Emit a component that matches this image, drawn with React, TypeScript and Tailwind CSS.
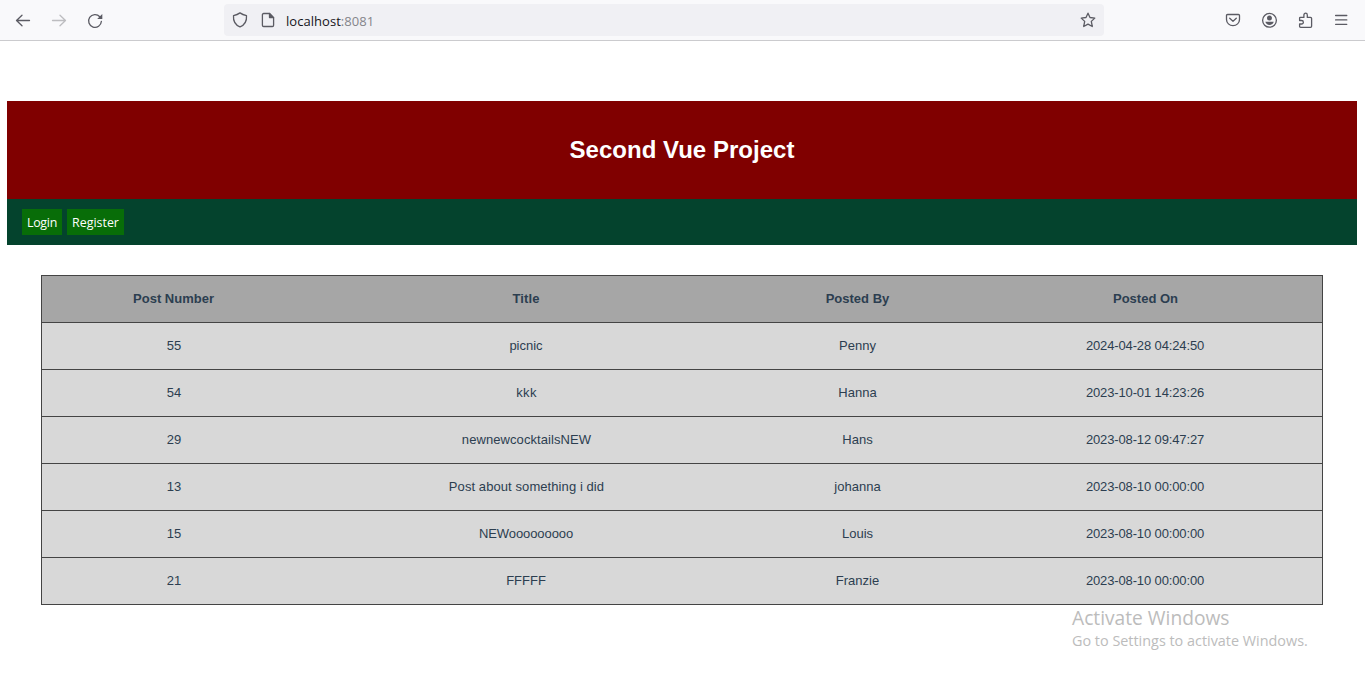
import React from "react";

type Post = { id: string; title: string; author: string; date: string; titleClass: string };

const posts: Post[] = [
  { id: "55", title: "picnic", author: "Penny", date: "2024-04-28 04:24:50", titleClass: "" },
  { id: "54", title: "kkk", author: "Hanna", date: "2023-10-01 14:23:26", titleClass: "tracking-[0.4px] pl-px" },
  { id: "29", title: "newnewcocktailsNEW", author: "Hans", date: "2023-08-12 09:47:27", titleClass: "tracking-[0.08px] pl-px" },
  { id: "13", title: "Post about something i did", author: "johanna", date: "2023-08-10 00:00:00", titleClass: "tracking-[0.08px] pl-px" },
  { id: "15", title: "NEWooooooooo", author: "Louis", date: "2023-08-10 00:00:00", titleClass: "tracking-[-0.08px]" },
  { id: "21", title: "FFFFF", author: "Franzie", date: "2023-08-10 00:00:00", titleClass: "" },
];

function Icon({ children, className = "" }: { children: React.ReactNode; className?: string }) {
  return (
    <svg
      width="16"
      height="16"
      viewBox="0 0 16 16"
      fill="none"
      stroke="currentColor"
      strokeWidth="1.3"
      strokeLinecap="round"
      strokeLinejoin="round"
      className={"shrink-0 " + className}
    >
      {children}
    </svg>
  );
}

function BrowserBar() {
  return (
    <div className="flex h-[41px] items-start border-b border-[#cbcbce] bg-[#f9f9fb] text-[#5b5b63]">
      <div className="flex w-[224px] gap-5 pt-[13px] pl-[15px]">
        <Icon>
          <path d="M14.5 7.500H1.5M7 2.200L1.5 7.500L7 12.800" />
        </Icon>
        <Icon className="text-[#bdbdc0]">
          <path d="M1.5 7.500H14.5M9 2.200L14.5 7.500L9 12.800" />
        </Icon>
        <Icon>
          <path d="M12.800 3.700A6.400 6.400 0 1 0 14.400 8.300" />
          <path d="M15.300 1V6.100H10.200Z" fill="currentColor" stroke="none" />
        </Icon>
      </div>
      <div className="mt-1 flex h-8 w-[880px] items-start rounded bg-[#f0f0f4] pr-2 pl-2">
        <Icon className="mt-2">
          <path d="M8 .9C9.800 2.200 12 3.100 14.500 3.700C14.900 8.500 12.800 12.800 8 14.900C3.200 12.800 1.100 8.500 1.500 3.700C4 3.100 6.200 2.200 8 .9Z" />
        </Icon>
        <Icon className="mt-2 ml-3">
          <path d="M9.500 1.500H3.700C2.900 1.500 2.400 2 2.400 2.800V13.200C2.400 14 2.900 14.500 3.700 14.500H12.300C13.100 14.500 13.600 14 13.600 13.200V5.600Z" />
          <path d="M9.500 1.500V5.600H13.600Z" fill="currentColor" />
        </Icon>
        <div className="ml-[10px] flex-1 pt-[7px] font-['Open_Sans',sans-serif] text-[13px] leading-5 tracking-[0.04px] text-[#15141a]">
          localhost<span className="text-[#85858b]">:8081</span>
        </div>
        <Icon className="mt-2">
          <path d="M8 1.200L10 5.500L14.800 6.100L11.300 9.400L12.300 14.500L8 12.100L3.700 14.500L4.700 9.400L1.200 6.100L6 5.500Z" />
        </Icon>
      </div>
      <div className="flex flex-1 justify-end gap-5 pt-3 pr-4">
        <Icon>
          <path d="M2.600 2.500H13.400C14.100 2.500 14.500 2.900 14.500 3.600V7.500A6.500 6.200 0 0 1 1.500 7.500V3.600C1.500 2.900 1.900 2.500 2.600 2.500Z" />
          <path d="M4.700 6.200L8 9.300L11.300 6.200" />
        </Icon>
        <Icon className="overflow-visible">
          <circle cx="8.500" cy="8.300" r="6.900" />
          <circle cx="8.500" cy="6.100" r="2.500" fill="currentColor" stroke="none" />
          <path d="M4.300 9.800H12.700C12.200 11.700 10.600 12.900 8.500 12.900S4.800 11.700 4.300 9.800Z" fill="currentColor" stroke="none" />
        </Icon>
        <Icon className="overflow-visible">
          <path d="M3.200 5.400H6.900V2.900A1.700 1.700 0 0 1 10.300 2.900V5.400H13.500C14.200 5.400 14.600 5.800 14.600 6.400V14.300C14.600 15 14.200 15.400 13.500 15.400H3.700C3 15.400 2.600 15 2.600 14.300V12H4.600A1.750 1.750 0 0 0 4.600 8.500H2.600V6C2.600 5.600 2.800 5.400 3.200 5.400Z" />
        </Icon>
        <Icon>
          <path d="M2.600 3.500H13.800M2.600 7.900H13.800M2.600 12.300H13.800" />
        </Icon>
      </div>
    </div>
  );
}

export default function App() {
  return (
    <div className="flex h-[682px] flex-col overflow-hidden bg-white font-['Liberation_Sans',Arial,sans-serif]">
      <BrowserBar />
      <header className="mt-[60px] mr-2 ml-[7px]">
        <div className="flex h-[98px] items-center justify-center bg-[#800000]">
          <h1 className="text-2xl leading-7 font-bold tracking-[0.03px] text-white">Second Vue Project</h1>
        </div>
        <nav className="flex h-[46px] items-center gap-[5px] bg-[#04432d] pl-[15px] font-['Open_Sans',sans-serif] text-[12.4px] text-white">
          <button className="h-[26px] w-10 bg-[#086d08] pt-[2px] leading-[18px] tracking-[-0.25px]">Login</button>
          <button className="h-[26px] w-[57px] bg-[#086d08] pt-[2px] leading-[18px]">Register</button>
        </nav>
      </header>
      <main className="mt-[30px] mr-[42px] ml-[41px]">
        <table className="w-full table-fixed border-separate border-spacing-0 border border-[#444] text-center text-[13px] leading-4 text-[#2c3e50]">
          <colgroup>
            <col className="w-[264px]" />
            <col className="w-[440px]" />
            <col className="w-[223px]" />
            <col className="w-[353px]" />
          </colgroup>
          <thead>
            <tr className="h-[46px] bg-[#a6a6a6]">
              <th className="pr-px">Post Number</th>
              <th className="tracking-[0.15px]">Title</th>
              <th>Posted By</th>
              <th>Posted On</th>
            </tr>
          </thead>
          <tbody>
            {posts.map((p) => (
              <tr key={p.id} className="h-[47px] bg-[#d8d8d8]">
                <td className="border-t border-[#444]">{p.id}</td>
                <td className={"border-t border-[#444] " + p.titleClass}>{p.title}</td>
                <td className="border-t border-[#444]">{p.author}</td>
                <td className="border-t border-[#444] pr-px tracking-[-0.13px]">{p.date}</td>
              </tr>
            ))}
          </tbody>
        </table>
      </main>
      <aside className="ml-[1072px] font-['Open_Sans',sans-serif] whitespace-nowrap text-[#bcbcbc]">
        <p className="text-[19.2px] leading-[26px]">Activate Windows</p>
        <p className="text-[14.4px] leading-[19px]">Go to Settings to activate Windows.</p>
      </aside>
    </div>
  );
}
